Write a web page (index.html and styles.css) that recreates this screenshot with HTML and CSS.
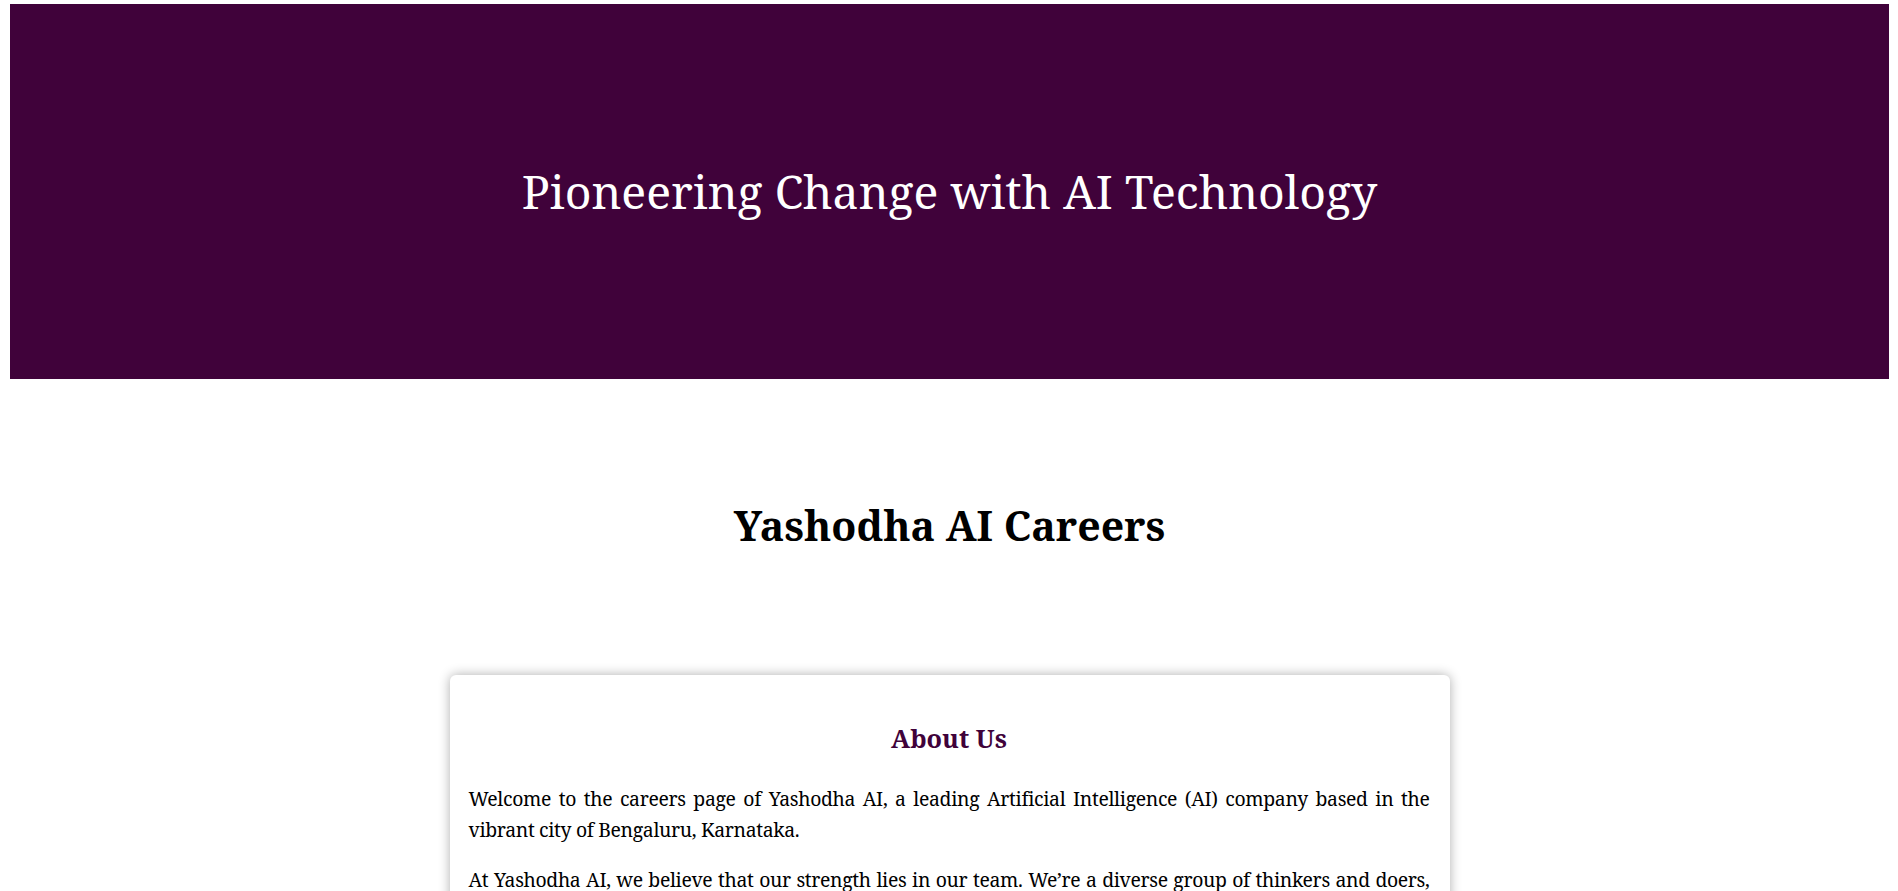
FILE: index.html
```html
<!DOCTYPE html>
<html lang="en">
<head>
<meta charset="utf-8">
<title>Yashodha AI Careers</title>
<link rel="stylesheet" href="styles.css">
</head>
<body>
<header class="hero">
  <h1 class="hero-title">Pioneering Change with AI Technology</h1>
</header>
<main class="content">
  <h2 class="page-title">Yashodha AI Careers</h2>
  <section class="card">
    <h3 class="card-title">About Us</h3>
    <p class="card-text">Welcome to the careers page of Yashodha AI, a leading Artificial Intelligence (AI) company based in the vibrant city of Bengaluru, Karnataka.</p>
    <p class="card-text">At Yashodha AI, we believe that our strength lies in our team. We’re a diverse group of thinkers and doers, united by a passion for solving real problems with intelligent technology. We work together to build products that make a difference to people and businesses across India and beyond.</p>
  </section>
</main>
</body>
</html>
```
FILE: styles.css
```css
html, body {
  margin: 0;
  padding: 0;
  background: #ffffff;
}

body {
  font-family: "Noto Serif", Georgia, serif;
  color: #000000;
  padding: 4px 9px 0 10px;
}

.hero {
  height: 375px;
  background: #40023a;
  display: flex;
  align-items: center;
  justify-content: center;
}

.hero-title {
  margin: 0;
  color: #ffffff;
  font-weight: normal;
  font-size: 46.4px;
  line-height: 1.2;
}

.content {
  display: flex;
  flex-direction: column;
  align-items: center;
}

.page-title {
  margin: 121.5px 0 0;
  font-size: 41px;
  font-weight: bold;
  line-height: 1.2;
  text-align: center;
}

.card {
  width: 1000px;
  box-sizing: border-box;
  margin-top: 125.3px;
  padding: 48px 20px 20px 19px;
  background: #ffffff;
  border-radius: 6px;
  box-shadow: 0 0 12px rgba(0, 0, 0, 0.32);
}

.card-title {
  margin: 0 0 30.7px;
  color: #40023a;
  font-size: 25.3px;
  font-weight: bold;
  line-height: 1.2;
  text-align: center;
}

.card-text {
  margin: 0 0 19.4px;
  font-size: 19.4px;
  line-height: 30.8px;
  letter-spacing: -0.35px;
  text-align: justify;
}
```
